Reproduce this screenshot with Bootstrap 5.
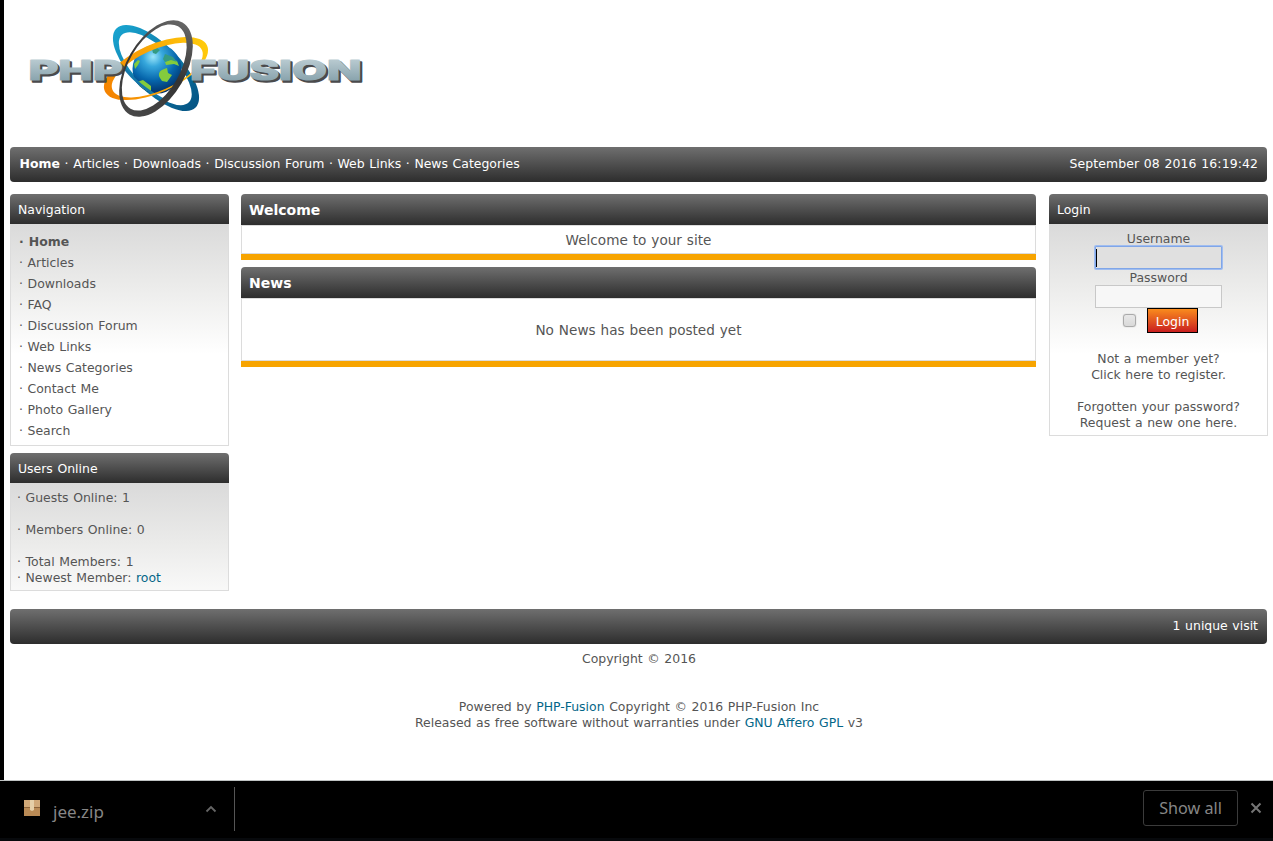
<!DOCTYPE html>
<html lang="en">
<head>
<meta charset="utf-8">
<title>PHP-Fusion</title>
<link href="https://cdn.jsdelivr.net/npm/bootstrap@5.3.0/dist/css/bootstrap.min.css" rel="stylesheet">
<style>
body{font-family:Verdana,"DejaVu Sans",sans-serif;font-size:12.45px;word-spacing:.65px;line-height:16px;color:#555;background:#fff;height:841px;overflow:hidden}
a{color:inherit;text-decoration:none}
.teal,.teal:hover{color:#046688}
.page{height:780px;border-left:4px solid #000;padding:0 5px 0 6px}
.masthead{height:147px}
.masthead svg{display:block}
.bar{height:35px;color:#fff;border-radius:4px;background:linear-gradient(#6f6f6f,#2d2d2d);padding:0 9px 2px;margin-right:1px}
.stamp{letter-spacing:.1px}
.columns{height:415px;margin-top:12px}
.side{width:219px;flex:none}
.side h2,.main h2{margin:0;color:#fff;background:linear-gradient(#6f6f6f,#2d2d2d);border-radius:4px 4px 0 0;padding-left:8px}
.side h2{font-size:12.45px;line-height:30px;font-weight:400;height:30px;padding-top:1px}
.main{width:795px;flex:none;margin:0 13px 0 12px}
.main h2{font-size:14px;line-height:31px;height:31px;font-weight:700;padding-top:1px}
.story{border:1px solid #dcdcdc;font-size:13.6px;text-align:center;padding-top:1px}
.accent{height:6px;background:#f7a400;margin-bottom:7px}
.pane{border:1px solid #dcdcdc;border-top:0;background:linear-gradient(#dadada,#ebebea 60px,#fff 130px)}
.links{height:222px;padding:7px 8px;line-height:21px}
.online{height:108px;padding:7px 6px}
.login{height:212px;text-align:center;padding-top:6px}
.lbl{height:16px;padding-top:1px}
.field{width:127px;height:23px;border:1px solid #c8c8c8;background:#f7f7f7;padding:0;display:block;margin:0 auto;outline:0;border-radius:0}
.field.active{background:#e0e0e0;border:1px solid #80a6e8;box-shadow:0 0 0 1px #a0bdf0;border-radius:1px;padding:2px 0 0 0}
.caret{display:block;width:1px;height:18px;background:#000}
.tick{width:13px;height:13px;border:1px solid #aaa;border-radius:3px;background:linear-gradient(#e8e8e8,#d9d9d9);box-shadow:0 0 1px #999;margin-right:3px}
.go{height:25px;width:51px;border:1px solid #000;background:linear-gradient(#f98b1d,#dd4c20 60%,#c91f1f);color:#fff;padding:0;line-height:25px;font-size:12.45px}
.shelf{height:61px;background:#000;border-top:1px solid #bfc3c3;border-bottom:3px solid #07090c;font-family:"Noto Sans",sans-serif;font-size:16.2px;word-spacing:0;color:#868686}
.file{width:235px;height:44px;border-right:1px solid #555;margin-top:6px;padding-left:24px}
.all{width:95px;height:36px;border:1px solid #3b3b3b;border-radius:3px;margin-top:9px}
</style>
</head>
<body>
<div class="page">
  <header class="masthead">
    <svg width="380" height="147" viewBox="10 0 380 147" role="img" aria-label="PHP-Fusion">
      <defs>
        <radialGradient id="sea" cx=".42" cy=".25" r=".8"><stop offset="0" stop-color="#9be6fa"/><stop offset=".25" stop-color="#36a7dc"/><stop offset=".6" stop-color="#0666ac"/><stop offset="1" stop-color="#02275c"/></radialGradient>
        <linearGradient id="steel" x2="0" y2="1"><stop offset=".15" stop-color="#bccdd3"/><stop offset=".85" stop-color="#86a1ab"/></linearGradient>
        <linearGradient id="blue" x2="1" y2="0"><stop offset="0" stop-color="#19a3cf"/><stop offset="1" stop-color="#055484"/></linearGradient>
        <linearGradient id="gold"><stop offset="0" stop-color="#f48200"/><stop offset="1" stop-color="#ffcb0c"/></linearGradient>
        <linearGradient id="coal"><stop offset="0" stop-color="#484848"/><stop offset=".5" stop-color="#333"/><stop offset="1" stop-color="#666"/></linearGradient>
      </defs>
      <g transform="translate(156 68) rotate(45)"><path fill="url(#blue)" fill-rule="evenodd" d="M-56 0a56 24 0 0 1 112 0a56 24 0 0 1-112 0zM-47.500 1a47.500 20 0 0 0 95 0a47.500 20 0 0 0-95 0z"/></g>
      <circle cx="157" cy="69" r="24.500" fill="url(#sea)"/>
      <path d="M159 76q-1-5 5-7l3-1 1 5 4 2-5 7-5-1-2-3zM165 62l6-3 6 2 2 5-5-2-8 1zM137 82l6-2 8 6v5l-4 0-7-5zM134 64l4-4 2 1-2 4-3 4z" fill="#84cb3c"/>
      <path d="M165 54l8 3 4 5-6-2-6 2-2-3zM152 49l5-1 3 2-4 4-3-1z" fill="#349b83"/>
      <path d="M123 66Q137 86 166 101" stroke="#1477aa" stroke-width="2.500" fill="none"/>
      <g transform="translate(156 68.500) rotate(-24)"><path fill="url(#gold)" fill-rule="evenodd" d="M-56 0a56 24 0 0 1 112 0a56 24 0 0 1-112 0zM-48.500 2a49 20.500 0 0 0 98 0a49 20.500 0 0 0-98 0z"/></g>
      <g font-family="Inter" font-weight="800" font-size="27.500" stroke-linejoin="round">
        <g fill="#4a4a4c" stroke="#4a4a4c" stroke-width="1.500">
          <text x="30.500" y="82" textLength="94" lengthAdjust="spacingAndGlyphs">PHP</text>
          <text x="192" y="82" textLength="171.500" lengthAdjust="spacingAndGlyphs">FUSION</text>
        </g>
        <g fill="url(#steel)" stroke="url(#steel)" stroke-width="1.200">
          <text x="28.500" y="80" textLength="94" lengthAdjust="spacingAndGlyphs">PHP</text>
          <text x="190" y="80" textLength="171.500" lengthAdjust="spacingAndGlyphs">FUSION</text>
        </g>
      </g>
      <g transform="translate(156 68.500) rotate(-60)"><path fill="url(#coal)" fill-rule="evenodd" d="M-53 0a53 29.500 0 0 1 106 0a53 29.500 0 0 1-106 0zM-47.500 -2a47.500 25.500 0 0 0 95 0a47.500 25.500 0 0 0-95 0z"/></g>
    </svg>
  </header>
  <nav class="bar d-flex justify-content-between align-items-center">
    <div style="padding-left:.6px"><a href="#" class="fw-bold">Home</a> · <a href="#">Articles</a> · <a href="#">Downloads</a> · <a href="#">Discussion Forum</a> · <a href="#">Web Links</a> · <a href="#">News Categories</a></div>
    <div class="stamp">September 08 2016 16:19:42</div>
  </nav>
  <div class="columns d-flex">
    <aside class="side">
      <h2>Navigation</h2>
      <div class="pane links">
        <div class="fw-bold">· <a href="#">Home</a></div>
        <div>· <a href="#">Articles</a></div><div>· <a href="#">Downloads</a></div><div>· <a href="#">FAQ</a></div><div>· <a href="#">Discussion Forum</a></div><div>· <a href="#">Web Links</a></div><div>· <a href="#">News Categories</a></div><div>· <a href="#">Contact Me</a></div><div>· <a href="#">Photo Gallery</a></div><div>· <a href="#">Search</a></div>
      </div>
      <h2 style="margin-top:7px">Users Online</h2>
      <div class="pane online">· Guests Online: 1<br><br>· Members Online: 0<br><br>· Total Members: 1<br>· Newest Member: <a href="#" class="teal">root</a></div>
    </aside>
    <main class="main">
      <h2>Welcome</h2>
      <div class="story" style="height:29px;line-height:27px">Welcome to your site</div><div class="accent"></div>
      <h2>News</h2>
      <div class="story" style="height:63px;line-height:61px">No News has been posted yet</div><div class="accent"></div>
    </main>
    <aside class="side">
      <h2>Login</h2>
      <div class="pane login">
        <div class="lbl">Username</div>
        <div class="field active"><span class="caret"></span></div>
        <div class="lbl">Password</div>
        <div class="field"></div>
        <div class="d-flex justify-content-center align-items-center gap-2 ps-1"><span class="tick"></span><button class="go">Login</button></div>
        <div style="margin-top:18px">Not a member yet?<br><a href="#">Click here</a> to register.<br><br>Forgotten your password?<br>Request a new one <a href="#">here</a>.</div>
      </div>
    </aside>
  </div>
  <div class="bar d-flex justify-content-end align-items-center">1 unique visit</div>
  <footer class="text-center" style="padding-top:7px">Copyright © 2016<br><br><br>Powered by <a href="#" class="teal">PHP-Fusion</a> Copyright © 2016 PHP-Fusion Inc<br>Released as free software without warranties under <a href="#" class="teal">GNU Affero GPL</a> v3</footer>
</div>
<div class="shelf d-flex">
  <div class="file d-flex">
    <svg width="16" height="16" class="mt-3" style="transform:translateY(-3px)" viewBox="0 0 16 16"><path fill="#b98a55" d="M0 0h16v16H0z"/><path fill="#d0a878" d="M0 0h16v7H0z"/><path fill="#8b6238" d="M0 7h16v1H0z"/><path fill="#e5cfa8" d="M6 0h4v10l-2 1-2-1z"/></svg>
    <span style="padding:17px 0 0 13px;font-size:17px">jee.zip</span>
    <svg class="ms-auto" width="12" height="8" style="margin:18px 17px 0 0" viewBox="0 0 12 8"><path d="M1.500 6.500L6 2l4.500 4.500" fill="none" stroke="#666" stroke-width="1.800"/></svg>
  </div>
  <div class="all ms-auto d-flex align-items-center justify-content-center">Show all</div>
  <svg width="12" height="12" style="margin:21px 11px 0 12px" viewBox="0 0 12 12"><path d="M1.500 1.500l9 9m0-9l-9 9" stroke="#757575" stroke-width="2"/></svg>
</div>
<script src="https://cdn.jsdelivr.net/npm/bootstrap@5.3.0/dist/js/bootstrap.bundle.min.js"></script>
</body>
</html>
